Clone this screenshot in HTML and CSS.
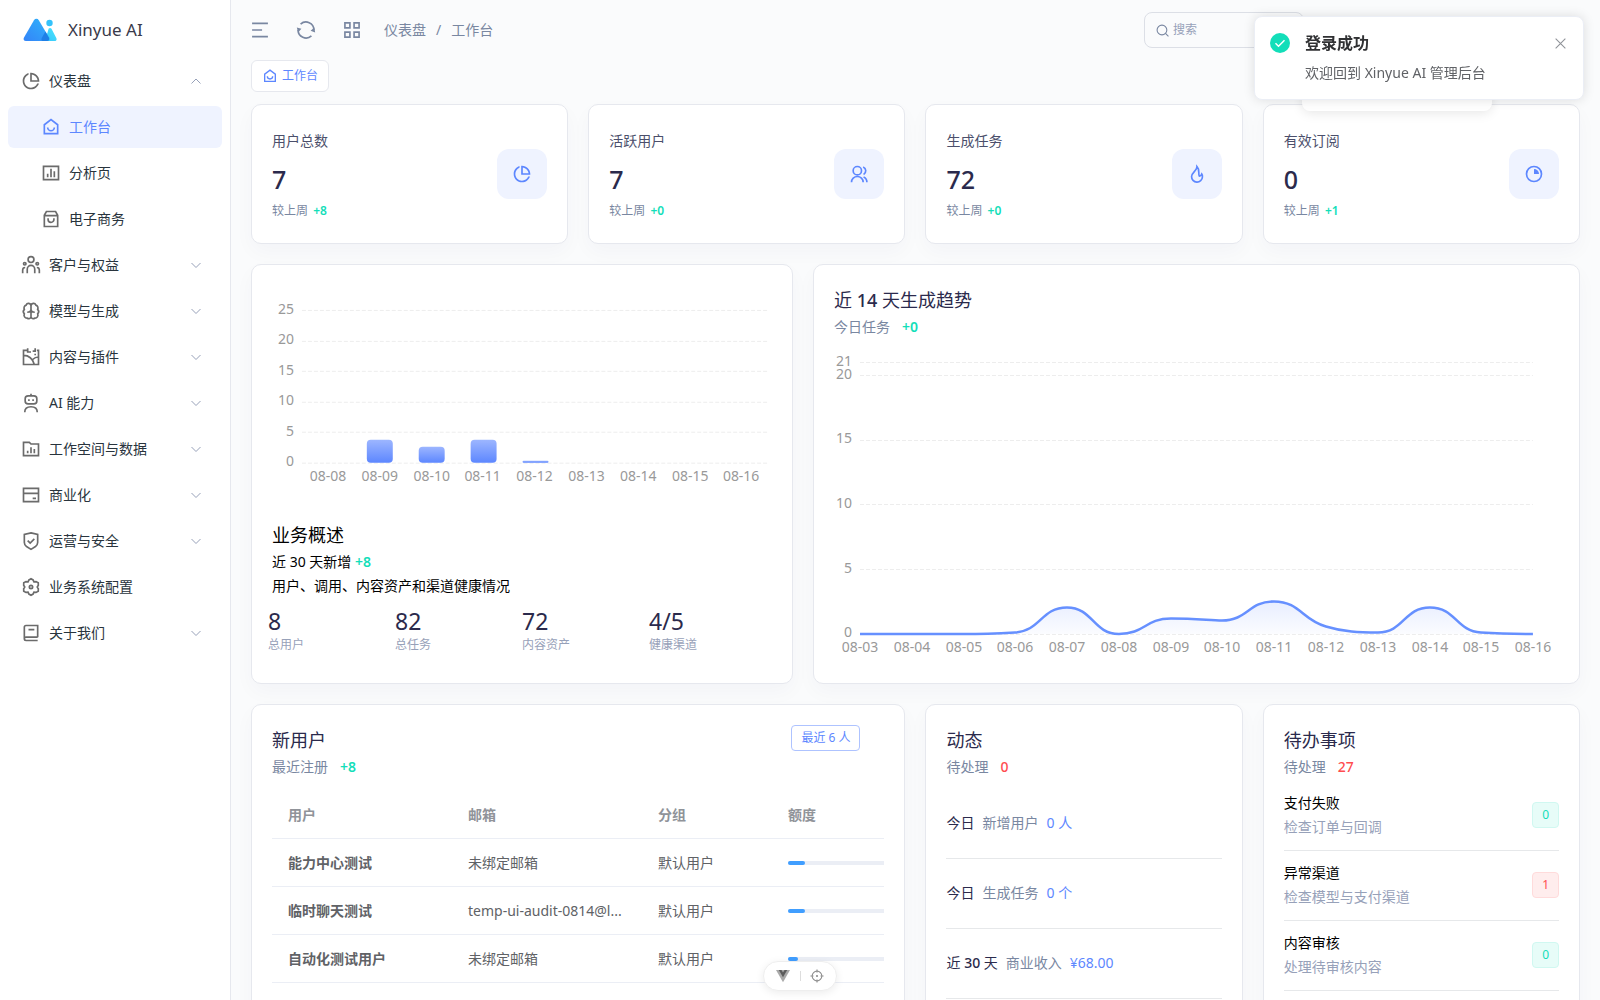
FILE: index.html
```
<!DOCTYPE html>
<html lang="zh-CN">
<head>
    <meta charset="UTF-8">
    <meta name="viewport" content="width=device-width, initial-scale=1.0">
    <title>工作台 - Xinyue AI</title>
    <link rel="stylesheet" href="styles.css">
</head>
<body>
    <!-- Icon sprite -->
    <svg class="sprite" aria-hidden="true">
        <symbol id="i-pie" viewBox="0 0 24 24"><path fill="currentColor" stroke="none" d="M9 2.4578V4.58152C6.06817 5.76829 4 8.64262 4 12C4 16.4183 7.58172 20 12 20C15.3574 20 18.2317 17.9318 19.4185 15H21.5422C20.2679 19.0571 16.4776 22 12 22C6.47715 22 2 17.5228 2 12C2 7.52236 4.94289 3.73207 9 2.4578ZM12 2C17.5228 2 22 6.47715 22 12C22 12.3375 21.9833 12.6711 21.9506 13H11V2.04938C11.3289 2.01672 11.6625 2 12 2ZM13 4.06189V11H19.9381C19.4869 7.38128 16.6187 4.51314 13 4.06189Z"/></symbol>
        <symbol id="i-home" viewBox="0 0 24 24"><path d="M4 20V9.3L12 3.2l8 6.1V20z"/><path d="M8 12.5a4 4 0 0 0 8 0"/></symbol>
        <symbol id="i-chart-box" viewBox="0 0 24 24"><path d="M3 4h18v16H3zM8 13v4M12 7v10M16 10v7"/></symbol>
        <symbol id="i-bag" viewBox="0 0 24 24"><path d="M4 7.5L6.5 3h11L20 7.5V21H4zM4 8h16M8.5 11v1.5a3.5 3.5 0 0 0 7 0V11"/></symbol>
        <symbol id="i-team" viewBox="0 0 24 24"><circle cx="12" cy="5.5" r="3.5"/><path d="M7.5 22v-5a4.5 4.5 0 0 1 9 0v5M2 22v-4a3 3 0 0 1 3-3M22 22v-4a3 3 0 0 0-3-3"/><circle cx="4.5" cy="10.5" r="1.5"/><circle cx="19.5" cy="10.5" r="1.5"/></symbol>
        <symbol id="i-brain" viewBox="0 0 24 24"><path d="M12 5.5a3 3 0 0 0-5.8-.6A3.6 3.6 0 0 0 4 10a4 4 0 0 0 0 5.5 3.5 3.5 0 0 0 3.5 5A2.7 2.7 0 0 0 12 19zM12 5.5a3 3 0 0 1 5.8-.6A3.6 3.6 0 0 1 20 10a4 4 0 0 1 0 5.5 3.5 3.5 0 0 1-3.5 5A2.7 2.7 0 0 1 12 19zM7.5 13.5c2.500 0 4.500-1 4.500-3.500M16.500 13.500c-2.500 0-4.500-1-4.500-3.500"/></symbol>
        <symbol id="i-album" viewBox="0 0 24 24"><path d="M8 4H3v17h18V4h-2M8 1.5V6h4M17 1.5V5h-3M3 10c6 0 11 4 13 11M21 12c-3 0-5 1-7 3M16 9h2"/></symbol>
        <symbol id="i-robot" viewBox="0 0 24 24"><rect x="5" y="3.5" width="14" height="9.5" rx="3.5"/><path d="M12 1v2.5M9.5 7.5v2M14.5 7.5v2M4.5 23c0-4 3-6.5 7.5-6.5s7.5 2.5 7.5 6.5"/></symbol>
        <symbol id="i-folder" viewBox="0 0 24 24"><path d="M3 4h7l2 2h9v14H3zM8 14v3M12 10v7M16 12v5"/></symbol>
        <symbol id="i-card" viewBox="0 0 24 24"><path d="M3 4h18v16H3zM3 10h18M14 16h4"/></symbol>
        <symbol id="i-shield" viewBox="0 0 24 24"><path d="M12 2.2l8 2v9.6a6 6 0 0 1-2.6 4.800L12 22l-5.400-3.400A6 6 0 0 1 4 13.800V4.200zM8 11.5l3 3 5-5"/></symbol>
        <symbol id="i-gear" viewBox="0 0 24 24"><path d="M9.5 3.5L12 2l2.5 1.5 1 2.2 2.5-.2 2.7 1.5.1 2.9L19.5 12l1.3 2.1-.1 2.9-2.7 1.5-2.5-.2-1 2.2L12 22l-2.5-1.5-1-2.2-2.5.2L3.3 17l-.1-2.9L4.5 12 3.2 9.9 3.3 7 6 5.5l2.5.2z"/><circle cx="12" cy="12" r="2"/></symbol>
        <symbol id="i-book" viewBox="0 0 24 24"><path d="M20 17H6a2 2 0 0 0 0 4h14M4 19V5a2 2 0 0 1 2-2h14v14M9 8h7"/></symbol>
        <symbol id="i-down" viewBox="0 0 24 24"><path d="M3 8l9 9 9-9"/></symbol>
        <symbol id="i-up" viewBox="0 0 24 24"><path d="M3 17l9-9 9 9"/></symbol>
        <symbol id="i-menu" viewBox="0 0 24 24"><path d="M2.500 4h19M2.500 12h12M2.500 20h19"/></symbol>
        <symbol id="i-refresh" viewBox="0 0 24 24"><path d="M5.5 5A9.500 9.500 0 0 1 21.500 12M18.500 19A9.500 9.500 0 0 1 2.500 12"/><path fill="currentColor" stroke="none" d="M1 9l5.500 1.500L2.500 15zM23 15l-5.500-2 4.500-4z"/></symbol>
        <symbol id="i-grid" viewBox="0 0 24 24"><path d="M3.5 3.5h6v6h-6zM14.5 3.5h6v6h-6zM3.5 14.5h6v6h-6zM14.5 14.5h6v6h-6z"/></symbol>
        <symbol id="i-search" viewBox="0 0 24 24"><circle cx="11" cy="11" r="9"/><path d="M17.5 17.5L23 23"/></symbol>
        <symbol id="i-users" viewBox="0 0 24 24"><circle cx="10" cy="8" r="5"/><path d="M3 22a7 7 0 0 1 14 0M17 3.5a5 5 0 0 1 .5 9M17.5 15.5A7 7 0 0 1 21.5 22"/></symbol>
        <symbol id="i-fire" viewBox="0 0 24 24"><path d="M12 3c.3 5-6.5 7-6.5 12a6.5 6.5 0 0 0 13 .5c.2-1.5-.2-2.7-.8-3.500-.7 1.800-1.700 2.500-2.900 2.500C13 12 16 7 12 3z"/></symbol>
        <symbol id="i-quarter" viewBox="0 0 24 24"><circle cx="12" cy="12" r="9"/><path fill="currentColor" stroke="none" d="M12 6a6 6 0 0 1 6 6h-6z"/></symbol>
        <symbol id="i-close" viewBox="0 0 24 24"><path d="M3 3l18 18M21 3L3 21"/></symbol>
    </svg>

    <aside class="sidebar">
        <a class="brand" href="#">
            <svg class="brand-logo" viewBox="0 0 34 24" aria-hidden="true">
                <defs>
                    <linearGradient id="logo-main" x1="1" y1="0" x2="0" y2="1"><stop offset="0" stop-color="#2fb4fb"/><stop offset="1" stop-color="#3484f8"/></linearGradient>
                    <linearGradient id="logo-side" x1="1" y1="0" x2="0" y2="1"><stop offset="0" stop-color="#4be4fd"/><stop offset="1" stop-color="#33c3fb"/></linearGradient>
                </defs>
                <path fill="url(#logo-main)" d="M11 2.2a2.8 2.8 0 0 1 4.800 0L26 19.500c1 1.800 0 3.500-2 3.500H2.800C.8 23 .1 21.200 1 19.600z"/>
                <path fill="url(#logo-side)" d="M25.600 10.800a1.700 1.700 0 0 1 2.900 0l4.800 9.200c.8 1.600 0 3-1.500 3H19.500c2 0 2.500-.8 3.200-2.200z"/>
                <path fill="#1f7fe6" d="M22.400 13.400L26 19.500c1 1.800 0 3.500-2 3.500h-4.500c-1.400-.4-1.300-2-.6-3.300z"/>
                <circle cx="26.5" cy="5" r="3.2" fill="#34c2fb"/>
            </svg>
            <span>Xinyue AI</span>
        </a>
        <nav class="menu">
            <a class="menu-item" href="#"><svg class="icon"><use href="#i-pie"/></svg><span>仪表盘</span><svg class="arrow"><use href="#i-up"/></svg></a>
            <a class="menu-item sub active" href="#"><svg class="icon"><use href="#i-home"/></svg><span>工作台</span></a>
            <a class="menu-item sub" href="#"><svg class="icon"><use href="#i-chart-box"/></svg><span>分析页</span></a>
            <a class="menu-item sub" href="#"><svg class="icon"><use href="#i-bag"/></svg><span>电子商务</span></a>
            <a class="menu-item" href="#"><svg class="icon"><use href="#i-team"/></svg><span>客户与权益</span><svg class="arrow"><use href="#i-down"/></svg></a>
            <a class="menu-item" href="#"><svg class="icon"><use href="#i-brain"/></svg><span>模型与生成</span><svg class="arrow"><use href="#i-down"/></svg></a>
            <a class="menu-item" href="#"><svg class="icon"><use href="#i-album"/></svg><span>内容与插件</span><svg class="arrow"><use href="#i-down"/></svg></a>
            <a class="menu-item" href="#"><svg class="icon"><use href="#i-robot"/></svg><span>AI 能力</span><svg class="arrow"><use href="#i-down"/></svg></a>
            <a class="menu-item" href="#"><svg class="icon"><use href="#i-folder"/></svg><span>工作空间与数据</span><svg class="arrow"><use href="#i-down"/></svg></a>
            <a class="menu-item" href="#"><svg class="icon"><use href="#i-card"/></svg><span>商业化</span><svg class="arrow"><use href="#i-down"/></svg></a>
            <a class="menu-item" href="#"><svg class="icon"><use href="#i-shield"/></svg><span>运营与安全</span><svg class="arrow"><use href="#i-down"/></svg></a>
            <a class="menu-item" href="#"><svg class="icon"><use href="#i-gear"/></svg><span>业务系统配置</span></a>
            <a class="menu-item" href="#"><svg class="icon"><use href="#i-book"/></svg><span>关于我们</span><svg class="arrow"><use href="#i-down"/></svg></a>
        </nav>
    </aside>

    <main class="main">
        <header class="topbar">
            <button class="icon-btn" type="button" aria-label="折叠菜单"><svg class="icon"><use href="#i-menu"/></svg></button>
            <button class="icon-btn" type="button" aria-label="刷新"><svg class="icon"><use href="#i-refresh"/></svg></button>
            <button class="icon-btn" type="button" aria-label="快速入口"><svg class="icon"><use href="#i-grid"/></svg></button>
            <nav class="breadcrumb"><a href="#">仪表盘</a><span>/</span><a href="#">工作台</a></nav>
            <label class="search">
                <svg class="icon"><use href="#i-search"/></svg>
                <input type="text" placeholder="搜索" aria-label="搜索">
            </label>
        </header>
        <div class="tabs">
            <a class="tab" href="#"><svg class="icon"><use href="#i-home"/></svg>工作台</a>
        </div>

        <div class="grid">
            <section class="card stat">
                <div class="stat-text">
                    <p class="stat-label">用户总数</p>
                    <p class="stat-value">7</p>
                    <p class="stat-change">较上周 <span class="up">+8</span></p>
                </div>
                <div class="stat-icon"><svg class="icon"><use href="#i-pie"/></svg></div>
            </section>
            <section class="card stat">
                <div class="stat-text">
                    <p class="stat-label">活跃用户</p>
                    <p class="stat-value">7</p>
                    <p class="stat-change">较上周 <span class="up">+0</span></p>
                </div>
                <div class="stat-icon"><svg class="icon"><use href="#i-users"/></svg></div>
            </section>
            <section class="card stat">
                <div class="stat-text">
                    <p class="stat-label">生成任务</p>
                    <p class="stat-value">72</p>
                    <p class="stat-change">较上周 <span class="up">+0</span></p>
                </div>
                <div class="stat-icon"><svg class="icon"><use href="#i-fire"/></svg></div>
            </section>
            <section class="card stat">
                <div class="stat-text">
                    <p class="stat-label">有效订阅</p>
                    <p class="stat-value">0</p>
                    <p class="stat-change">较上周 <span class="up">+1</span></p>
                </div>
                <div class="stat-icon"><svg class="icon"><use href="#i-quarter"/></svg></div>
            </section>

            <section class="card overview">
                <svg class="chart" viewBox="0 0 501 220" role="img" aria-label="业务概述柱状图">
                    <defs>
                        <linearGradient id="bar-fill" x1="0" y1="0" x2="0" y2="1"><stop offset="0" stop-color="#9db6ff"/><stop offset="1" stop-color="#5d87ff"/></linearGradient>
                    </defs>
                    <path class="gridline" d="M30 25.5h466M30 56.5h466M30 86.5h466M30 117.5h466M30 147.5h466M30 178.5h466"/>
                    <g class="axis-y">
                        <text x="22" y="29">25</text><text x="22" y="59">20</text><text x="22" y="90">15</text>
                        <text x="22" y="120">10</text><text x="22" y="151">5</text><text x="22" y="181">0</text>
                    </g>
                    <g fill="url(#bar-fill)">
                        <rect x="95" y="155" width="26" height="23" rx="4"/>
                        <rect x="147" y="162" width="26" height="16" rx="4"/>
                        <rect x="199" y="155" width="26" height="23" rx="4"/>
                        <rect x="251" y="176" width="26" height="2" rx="1"/>
                    </g>
                    <g class="axis-x">
                        <text x="56" y="196">08-08</text><text x="108" y="196">08-09</text><text x="160" y="196">08-10</text>
                        <text x="211" y="196">08-11</text><text x="263" y="196">08-12</text><text x="315" y="196">08-13</text>
                        <text x="367" y="196">08-14</text><text x="419" y="196">08-15</text><text x="470" y="196">08-16</text>
                    </g>
                </svg>
                <div class="overview-text">
                    <h2 class="card-title">业务概述</h2>
                    <p>近 30 天新增 <span class="up">+8</span></p>
                    <p>用户、调用、内容资产和渠道健康情况</p>
                </div>
                <ul class="totals">
                    <li><strong>8</strong><span>总用户</span></li>
                    <li><strong>82</strong><span>总任务</span></li>
                    <li><strong>72</strong><span>内容资产</span></li>
                    <li><strong>4/5</strong><span>健康渠道</span></li>
                </ul>
            </section>

            <section class="card trend">
                <h2 class="card-title">近 <b>14</b> 天生成趋势</h2>
                <p class="card-sub">今日任务<span class="up">+0</span></p>
                <svg class="chart" viewBox="0 0 725 318" role="img" aria-label="近 14 天生成趋势">
                    <defs>
                        <linearGradient id="area-fill" gradientUnits="userSpaceOnUse" x1="0" y1="255" x2="0" y2="290"><stop offset="0" stop-color="#5d87ff" stop-opacity=".15"/><stop offset="1" stop-color="#5d87ff" stop-opacity=".02"/></linearGradient>
                    </defs>
                    <path class="gridline" d="M26 17.5h673M26 30.5h673M26 95.5h673M26 159.5h673M26 224.5h673M26 289.5h673"/>
                    <path fill="url(#area-fill)" d="M26 289H130C150 289 162 288.5 181 287.5C207 286 207 262.5 233 262.5S259 289 285 289S311 273.5 337 273.5S376 275.5 388 275.5C414 275.5 414 256.5 440 256.5S468 275 492 281.5C510 287 525 287.5 544 287.5C570 287.5 570 262.5 596 262.5S622 286 647 287.5C665 288.7 680 289 699 289z"/>
                    <path class="trend-line" d="M26 289H130C150 289 162 288.5 181 287.5C207 286 207 262.5 233 262.5S259 289 285 289S311 273.5 337 273.5S376 275.5 388 275.5C414 275.5 414 256.5 440 256.5S468 275 492 281.5C510 287 525 287.5 544 287.5C570 287.5 570 262.5 596 262.5S622 286 647 287.5C665 288.7 680 289 699 289"/>
                    <g class="axis-y">
                        <text x="18" y="21">21</text><text x="18" y="34">20</text><text x="18" y="98">15</text>
                        <text x="18" y="163">10</text><text x="18" y="228">5</text><text x="18" y="292">0</text>
                    </g>
                    <g class="axis-x">
                        <text x="26" y="307">08-03</text><text x="78" y="307">08-04</text><text x="130" y="307">08-05</text>
                        <text x="181" y="307">08-06</text><text x="233" y="307">08-07</text><text x="285" y="307">08-08</text>
                        <text x="337" y="307">08-09</text><text x="388" y="307">08-10</text><text x="440" y="307">08-11</text>
                        <text x="492" y="307">08-12</text><text x="544" y="307">08-13</text><text x="596" y="307">08-14</text>
                        <text x="647" y="307">08-15</text><text x="699" y="307">08-16</text>
                    </g>
                </svg>
            </section>

            <section class="card users">
                <div class="card-head">
                    <div>
                        <h2 class="card-title">新用户</h2>
                        <p class="card-sub">最近注册<span class="up">+8</span></p>
                    </div>
                    <button class="recent" type="button">最近 6 人</button>
                </div>
                <div class="table-wrap">
                    <table>
                        <colgroup><col class="col-user"><col class="col-mail"><col class="col-group"><col class="col-quota"></colgroup>
                        <thead>
                            <tr><th>用户</th><th>邮箱</th><th>分组</th><th>额度</th></tr>
                        </thead>
                        <tbody>
                            <tr><td class="name">能力中心测试</td><td>未绑定邮箱</td><td>默认用户</td><td><div class="progress"><i style="width: 10%"></i></div></td></tr>
                            <tr><td class="name">临时聊天测试</td><td>temp-ui-audit-0814@l...</td><td>默认用户</td><td><div class="progress"><i style="width: 10%"></i></div></td></tr>
                            <tr><td class="name">自动化测试用户</td><td>未绑定邮箱</td><td>默认用户</td><td><div class="progress"><i style="width: 6%"></i></div></td></tr>
                        </tbody>
                    </table>
                </div>
            </section>

            <section class="card feed">
                <h2 class="card-title">动态</h2>
                <p class="card-sub">待处理<span class="down">0</span></p>
                <ul class="feed-list">
                    <li><span class="when">今日</span><span class="what">新增用户</span><a href="#">0 人</a></li>
                    <li><span class="when">今日</span><span class="what">生成任务</span><a href="#">0 个</a></li>
                    <li><span class="when">近 <b>30</b> 天</span><span class="what">商业收入</span><a href="#">¥68.00</a></li>
                </ul>
            </section>

            <section class="card todo">
                <h2 class="card-title">待办事项</h2>
                <p class="card-sub">待处理<span class="down">27</span></p>
                <ul class="todo-list">
                    <li><div><p>支付失败</p><p class="hint">检查订单与回调</p></div><span class="tag ok">0</span></li>
                    <li><div><p>异常渠道</p><p class="hint">检查模型与支付渠道</p></div><span class="tag bad">1</span></li>
                    <li><div><p>内容审核</p><p class="hint">处理待审核内容</p></div><span class="tag ok">0</span></li>
                </ul>
            </section>
        </div>
    </main>

    <div class="popover"></div>
    <div class="notification" role="alert">
        <svg class="notification-icon" viewBox="0 0 20 20" aria-hidden="true"><circle cx="10" cy="10" r="10" fill="#13deb9"/><path d="M5.5 10.2l3 3 6-6" fill="none" stroke="#fff" stroke-width="1.5"/></svg>
        <div class="notification-body">
            <h2>登录成功</h2>
            <p>欢迎回到 Xinyue AI 管理后台</p>
        </div>
        <button class="close" type="button" aria-label="关闭"><svg class="icon"><use href="#i-close"/></svg></button>
    </div>

    <div class="devtools">
        <button type="button" aria-label="Vue DevTools">
            <svg viewBox="0 0 16 14" aria-hidden="true"><path fill="#a9a9a9" d="M0 0h16L8 14z"/><path fill="#5c5c5c" d="M3.2 0h3L8 3l1.8-3h3L8 8.5z"/></svg>
        </button>
        <span></span>
        <button type="button" aria-label="检查组件">
            <svg viewBox="0 0 16 16" fill="none" stroke="#8f8f8f" stroke-width="1.3" aria-hidden="true"><circle cx="8" cy="8" r="5.5"/><circle cx="8" cy="8" r=".6"/><path d="M8 .5v3.5M8 12v3.5M.5 8H4M12 8h3.5"/></svg>
        </button>
    </div>
</body>
</html>
```
FILE: styles.css
```
* {
    box-sizing: border-box;
    margin: 0;
    padding: 0;
}
body {
    display: flex;
    height: 100vh;
    overflow: hidden;
    background: #fafbfc;
    color: #29343d;
    font-family: "Noto Sans", "Noto Sans CJK SC", sans-serif;
    font-size: 14px;
    line-height: 24px;
}
a {
    color: inherit;
    text-decoration: none;
}
ul {
    list-style: none;
}
button {
    border: none;
    background: none;
    font: inherit;
    cursor: pointer;
}
b {
    font-weight: 500;
}
.sprite {
    position: absolute;
    width: 0;
    height: 0;
}
.icon,
.arrow {
    flex: none;
    width: 20px;
    height: 20px;
    fill: none;
    stroke: currentColor;
    stroke-width: 2;
}
.up {
    color: #13deb9;
    font-weight: 600;
}
.down {
    color: #ff4d4f;
    font-weight: 500;
}

/* Sidebar */
.sidebar {
    flex: none;
    width: 231px;
    background: #fff;
    border-right: 1px solid #e6e8ee;
}
.brand {
    display: flex;
    align-items: center;
    gap: 11px;
    height: 60px;
    padding-left: 23px;
    color: #3a3a4a;
    font-size: 17px;
}
.brand-logo {
    width: 34px;
    height: 24px;
}
.menu-item {
    display: flex;
    align-items: center;
    gap: 8px;
    height: 42px;
    margin: 0 8px 4px;
    padding: 0 20px 0 13px;
    border-radius: 6px;
}
.menu-item .icon {
    color: #6b6b6b;
}
.menu-item.sub {
    padding-left: 33px;
}
.menu-item.active,
.menu-item.active .icon {
    color: #5d87ff;
}
.menu-item.active {
    background: #eff3ff;
}
.menu-item .arrow {
    width: 12px;
    height: 12px;
    margin-left: auto;
    color: #97a1b9;
}

/* Top bar */
.main {
    flex: 1;
    min-width: 0;
    padding: 0 20px;
    overflow: hidden;
}
.topbar {
    display: flex;
    align-items: center;
    gap: 26px;
    height: 60px;
    margin-left: -1px;
    color: #7987a1;
}
.icon-btn {
    display: flex;
    color: #7987a1;
}
.breadcrumb {
    display: flex;
    gap: 10px;
    margin-left: -4px;
    margin-right: auto;
}
.search {
    display: flex;
    align-items: center;
    gap: 4px;
    width: 160px;
    height: 36px;
    margin-right: 276px;
    padding: 0 11px;
    border: 1px solid #dcdfe6;
    border-radius: 8px;
}
.search .icon {
    width: 13px;
    height: 13px;
}
.search input {
    width: 100%;
    border: none;
    outline: none;
    background: none;
    font: inherit;
    font-size: 12px;
}
.search input::placeholder {
    color: #97a1b9;
}
.tabs {
    display: flex;
    margin-bottom: 12px;
}
.tab {
    display: flex;
    align-items: center;
    gap: 4px;
    height: 32px;
    padding: 0 10px;
    border: 1px solid #e6e8ee;
    border-radius: 6px;
    background: #fff;
    color: #5d87ff;
    font-size: 12px;
}
.tab .icon {
    width: 16px;
    height: 16px;
}

/* Cards */
.grid {
    display: grid;
    grid-template-columns: repeat(24, minmax(0, 1fr));
    gap: 20px;
}
.card {
    padding: 20px;
    border: 1px solid #e6e8ee;
    border-radius: 10px;
    background: #fff;
    box-shadow: 0 8px 20px rgba(30, 40, 90, 0.03);
}
.card-title {
    color: #2b2a4c;
    font-size: 18px;
    font-weight: 400;
    line-height: 30px;
}
.card-sub {
    color: #7987a1;
}
.card-sub span {
    margin-left: 12px;
}
.stat {
    grid-column: span 6;
    display: flex;
    align-items: center;
    justify-content: space-between;
    height: 140px;
}
.stat-text {
    padding-top: 4px;
}
.stat-label {
    color: #4b4f6b;
    line-height: 22px;
}
.stat-value {
    margin-top: 9px;
    color: #2b2a4c;
    font-size: 25px;
    font-weight: 500;
    line-height: 36px;
}
.stat-change {
    margin-top: 2px;
    color: #7987a1;
    font-size: 12px;
}
.stat-change .up {
    margin-left: 2px;
}
.stat-icon {
    display: grid;
    place-items: center;
    width: 50px;
    height: 50px;
    border-radius: 12px;
    background: #eff3ff;
    color: #5d87ff;
}

/* Charts */
.chart {
    display: block;
    width: 100%;
}
.chart text {
    fill: #999;
    font-size: 14px;
}
.axis-y {
    text-anchor: end;
}
.axis-x {
    text-anchor: middle;
}
.gridline {
    fill: none;
    stroke: #ededed;
    stroke-dasharray: 4 2;
}
.trend-line {
    fill: none;
    stroke: #6690ff;
    stroke-width: 2.5;
}
.overview {
    grid-column: span 10;
}
.overview-text {
    margin-top: 15px;
    color: #000;
}
.overview-text .card-title {
    color: #000;
}
.totals {
    display: grid;
    grid-template-columns: repeat(4, 1fr);
    margin: 8px -4px 0;
}
.totals strong {
    display: block;
    color: #2b2a4c;
    font-size: 23px;
    font-weight: 400;
    line-height: 30px;
}
.totals span {
    display: block;
    color: #97a1b9;
    font-size: 12px;
    line-height: 18px;
}
.trend {
    grid-column: span 14;
}
.trend .chart {
    margin-top: 6px;
}

/* New users */
.users {
    grid-column: span 12;
}
.card-head {
    display: flex;
    align-items: flex-start;
    justify-content: space-between;
}
.recent {
    height: 26px;
    margin-right: 24px;
    padding: 0 9px;
    border: 1px solid #aec3ff;
    border-radius: 4px;
    color: #5d87ff;
    font-size: 12px;
    line-height: 24px;
}
.table-wrap {
    margin-top: 12px;
    overflow: hidden;
}
table {
    width: 700px;
    table-layout: fixed;
    border-collapse: collapse;
    color: #606266;
}
.col-user {
    width: 180px;
}
.col-mail {
    width: 190px;
}
.col-group {
    width: 130px;
}
th,
td {
    height: 48px;
    padding: 0 16px;
    border-bottom: 1px solid #ebeef5;
    text-align: left;
    white-space: nowrap;
}
th {
    color: #909399;
    font-weight: 600;
}
.name {
    font-weight: 700;
}
.progress {
    height: 4px;
    border-radius: 2px;
    background: #ebeef5;
}
.progress i {
    display: block;
    height: 4px;
    border-radius: 2px;
    background: #409eff;
}

/* Feed and todo */
.feed,
.todo {
    grid-column: span 6;
}
.feed-list {
    margin-top: 10px;
}
.feed-list li {
    display: flex;
    align-items: center;
    gap: 8px;
    height: 70px;
    border-bottom: 1px solid #e6e8ea;
}
.when {
    color: #2b2a4c;
}
.what {
    color: #7987a1;
}
.feed-list a {
    color: #5d87ff;
}
.todo-list {
    margin-top: 2px;
}
.todo-list li {
    display: flex;
    align-items: center;
    justify-content: space-between;
    height: 70px;
    border-bottom: 1px solid #e6e8ea;
    color: #000;
}
.todo-list .hint {
    color: #97a1b9;
}
.tag {
    padding: 0 9px;
    border: 1px solid;
    border-radius: 4px;
    font-size: 12px;
}
.tag.ok {
    border-color: #d0f8f1;
    background: #e7fcf8;
    color: #13deb9;
}
.tag.bad {
    border-color: #ffdbdb;
    background: #ffeded;
    color: #ff4d4f;
}

/* Overlays */
.popover {
    position: fixed;
    top: 60px;
    right: 108px;
    width: 190px;
    height: 51px;
    border-radius: 8px;
    background: #fff;
    box-shadow: 0 2px 12px rgba(0, 0, 0, 0.1);
}
.notification {
    position: fixed;
    top: 16px;
    right: 16px;
    display: flex;
    align-items: flex-start;
    width: 330px;
    padding: 14px 16px 14px 15px;
    border: 1px solid #ebeef5;
    border-radius: 8px;
    background: #fff;
    box-shadow: 0 0 12px rgba(0, 0, 0, 0.12);
}
.notification-icon {
    width: 20px;
    height: 20px;
    margin-top: 2px;
}
.notification-body {
    flex: 1;
    margin-left: 15px;
}
.notification h2 {
    color: #303133;
    font-size: 16px;
    font-weight: 700;
}
.notification p {
    margin-top: 6px;
    color: #606266;
}
.close {
    display: flex;
    margin-top: 6px;
    color: #909399;
}
.close .icon {
    width: 13px;
    height: 13px;
}
.devtools {
    position: fixed;
    bottom: 9px;
    left: 50%;
    display: flex;
    align-items: center;
    justify-content: space-between;
    width: 74px;
    height: 30px;
    margin-left: -37px;
    padding: 0 12px;
    border: 1px solid #eee;
    border-radius: 15px;
    background: #fff;
    box-shadow: 0 2px 8px rgba(0, 0, 0, 0.08);
}
.devtools button {
    display: flex;
}
.devtools svg {
    width: 14px;
    height: 14px;
}
.devtools span {
    width: 1px;
    height: 10px;
    background: #ddd;
}
```
